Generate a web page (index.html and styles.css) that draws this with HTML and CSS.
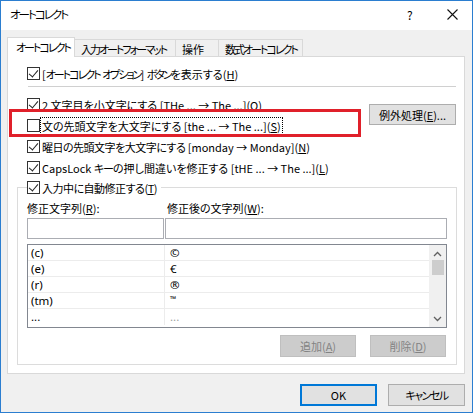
FILE: index.html
```html
<!DOCTYPE html>
<html lang="ja">
<head>
<meta charset="utf-8">
<title>オートコレクト</title>
<link rel="stylesheet" href="styles.css">
</head>
<body>
<div class="window">
  <div class="titlebar">
    <span class="title kt">オートコレクト</span>
    <span class="help">?</span>
    <span class="close"><svg width="11" height="11" viewBox="0 0 11 11"><path d="M0.5 0.5L10.5 10.5M10.5 0.5L0.5 10.5" stroke="#111" stroke-width="1.1" fill="none"/></svg></span>
  </div>
  <div class="content">
    <div class="tabs">
      <div class="tab active t1"><span class="kt">オートコレクト</span></div>
      <div class="tab t2"><span class="kt">入力オートフォーマット</span></div>
      <div class="tab t3">操作</div>
      <div class="tab t4"><span class="kt">数式オートコレクト</span></div>
    </div>
    <div class="panel">
      <div class="row first"><span class="cb checked"></span><span>[<span class="kt">オートコレクト</span> <span class="kt">オプション</span>] <span class="kt">ボタン</span>を表示する(<u>H</u>)</span></div>
      <div class="sep"></div>
      <div class="options">
        <div class="optlist">
          <div class="row"><span class="cb checked"></span><span>2 文字目を小文字にする [THe ... → The ...](<u>O</u>)</span></div>
          <div class="row"><span class="cb"></span><span class="focus">文の先頭文字を大文字にする [the ... → The ...](<u>S</u>)</span></div>
          <div class="row"><span class="cb checked"></span><span><span class="tight">曜日の先頭文字を大文字にする</span> [monday → Monday](<u>N</u>)</span></div>
          <div class="row"><span class="cb checked"></span><span>CapsLock <span class="kt1">キー</span>の押し間違いを修正する [tHE ... → The ...](<u>L</u>)</span></div>
        </div>
        <div class="btn exc">例外処理(<u>E</u>)...</div>
      </div>
      <fieldset class="group">
        <legend><span class="cb checked"></span><span class="tight">入力中に自動修正する(<u>T</u>)</span></legend>
        <div class="labels">
          <span>修正文字列(<u>R</u>):</span>
          <span>修正後の文字列(<u>W</u>):</span>
        </div>
        <div class="inputs">
          <div class="input"></div>
          <div class="input"></div>
        </div>
        <div class="list">
          <div class="rows">
            <div class="lrow"><span class="c1">(c)</span><span class="c2">©</span></div>
            <div class="lrow"><span class="c1">(e)</span><span class="c2">€</span></div>
            <div class="lrow"><span class="c1">(r)</span><span class="c2">®</span></div>
            <div class="lrow"><span class="c1">(tm)</span><span class="c2 tm">™</span></div>
            <div class="lrow last"><span class="c1">...</span><span class="c2 dim">...</span></div>
          </div>
          <div class="scrollbar">
            <svg class="arrow" width="9" height="6" viewBox="0 0 9 6"><path d="M1 5L4.5 1.5L8 5" stroke="#606060" stroke-width="1.3" fill="none"/></svg>
            <div class="thumb"></div>
            <div class="track"></div>
            <svg class="arrow" width="9" height="6" viewBox="0 0 9 6"><path d="M1 1L4.5 4.5L8 1" stroke="#606060" stroke-width="1.3" fill="none"/></svg>
          </div>
        </div>
        <div class="gbtns">
          <div class="btn disabled">追加(<u>A</u>)</div>
          <div class="btn disabled">削除(<u>D</u>)</div>
        </div>
      </fieldset>
    </div>
    <div class="footer">
      <div class="btn ok">OK</div>
      <div class="btn"><span class="kt15">キャンセル</span></div>
    </div>
  </div>
  <div class="highlight"></div>
</div>
</body>
</html>
```
FILE: styles.css
```css
* { box-sizing: border-box; }
html, body { margin: 0; padding: 0; background: #ffffff; }
body {
  font-family: "Noto Sans CJK JP", "Noto Sans", sans-serif;
  font-size: 11px;
  font-feature-settings: "palt";
  color: #000;
}
u { text-decoration: underline; text-underline-offset: 1px; }
.kt { letter-spacing: -2px; }
.kt1 { letter-spacing: -1px; }
.kt15 { letter-spacing: -1.5px; }
.tight { letter-spacing: -0.5px; }
.window {
  position: relative;
  width: 473px;
  height: 413px;
  border: 1px solid #2b7ed0;
  background: #f0f0f0;
  display: flex;
  flex-direction: column;
}
.titlebar {
  height: 29px;
  background: #fff;
  display: flex;
  align-items: center;
  padding-left: 9px;
}
.title { flex: 1; font-size: 11.5px; margin-top: -3px; }
.help { width: 12px; margin-right: 28px; font-size: 12px; margin-top: -3px; }
.close { width: 11px; margin-right: 14px; display: flex; margin-top: -3px; }
.content { flex: 1; display: flex; flex-direction: column; padding: 6px 0 0 6px; }
.tabs { display: flex; align-items: flex-end; height: 20px; }
.tab {
  height: 18px;
  border: 1px solid #d9d9d9;
  border-bottom: none;
  border-left: none;
  background: #f0f0f0;
  padding: 0 0 0 6px;
  display: flex;
  align-items: center;
  margin-bottom: -1px;
  color: #000;
  white-space: nowrap;
}
.tab.active {
  height: 20px;
  background: #fff;
  border-left: 1px solid #d9d9d9;
  position: relative;
  z-index: 1;
  padding: 0 0 2px 8px;
  margin-bottom: -1px;
}
.t1 { width: 68px; }
.t2 { width: 101px; }
.t3 { width: 43px; }
.t4 { width: 84px; }
.panel {
  width: 458px;
  height: 318px;
  background: #fff;
  border: 1px solid #d9d9d9;
  padding: 6px 7px 0 9px;
  display: flex;
  flex-direction: column;
}
.row {
  height: 21px;
  display: flex;
  align-items: center;
  padding-left: 10px;
  white-space: nowrap;
}
.cb {
  width: 13px;
  height: 13px;
  border: 1px solid #333;
  background: #fff;
  flex: none;
  margin-right: 2px;
  position: relative;
}
.cb.checked::after {
  content: "";
  position: absolute;
  left: 3px;
  top: 0px;
  width: 4px;
  height: 8px;
  border-right: 1.3px solid #222;
  border-bottom: 1.3px solid #222;
  transform: rotate(40deg);
}
.focus { outline: 1px dotted #000; outline-offset: 0; padding: 0 1px; margin-left: -1px; }
.sep { height: 1px; background: #d0d0d0; margin: 2px 1px 7px 11px; }
.options { display: flex; justify-content: space-between; align-items: flex-start; }
.btn {
  height: 22px;
  background: #e1e1e1;
  border: 1px solid #adadad;
  display: flex;
  align-items: center;
  justify-content: center;
  white-space: nowrap;
}
.exc { width: 87px; margin-top: 10px; margin-right: 1px; height: 21px; }
.group {
  margin: 0 0 0 0;
  border: 1px solid #dcdcdc;
  padding: 0 9px 0 9px;
  height: 187px;
  min-width: 0;
}
.group legend {
  display: flex;
  align-items: center;
  height: 19px;
  padding: 0 4px 0 0;
  margin-left: 0;
}
.labels { display: flex; height: 20px; align-items: center; margin-top: 1px; }
.labels span:first-child { width: 140px; }
.inputs { display: flex; gap: 1px; margin-top: 0; }
.input { height: 21px; border: 1px solid #abadb3; background: #fff; }
.input:first-child { width: 137px; }
.input:last-child { width: 282px; }
.list {
  margin-top: 5px;
  width: 420px;
  height: 84px;
  border: 1px solid #828790;
  display: flex;
  background: #fff;
}
.rows { flex: 1; display: flex; flex-direction: column; }
.lrow {
  height: 16px;
  display: flex;
  border-bottom: 1px solid #ececec;
  font-family: "Noto Sans", "Noto Sans CJK JP", sans-serif;
  font-size: 11.5px;
}
.lrow.last { border-bottom: none; }
.c1 { width: 137px; border-right: 1px solid #ececec; padding-left: 3px; line-height: 15px; }
.c2 { padding-left: 5px; line-height: 15px; }
.c2.tm { font-size: 8px; line-height: 12px; }
.c2.dim { color: #a0a0a0; }
.scrollbar {
  width: 17px;
  background: #f0f0f0;
  display: flex;
  flex-direction: column;
  align-items: center;
  padding: 6px 0 5px;
}
.thumb { width: 12px; height: 15px; background: #cdcdcd; margin-top: 3px; }
.track { flex: 1; }
.gbtns { display: flex; justify-content: flex-end; gap: 14px; margin-top: 7px; margin-right: 1px; }
.btn.disabled { width: 76px; background: #cccccc; border-color: #bfbfbf; color: #838383; }
.footer { display: flex; justify-content: flex-end; gap: 11px; padding: 10px 7px 0 0; }
.footer .btn { width: 77px; height: 22px; }
.btn.ok { border: 1px solid #0078d7; box-shadow: inset 0 0 0 1px #0078d7; }
.highlight {
  position: absolute;
  left: 8px;
  top: 108px;
  width: 352px;
  height: 28px;
  border: 3px solid #e0202a;
}
```
